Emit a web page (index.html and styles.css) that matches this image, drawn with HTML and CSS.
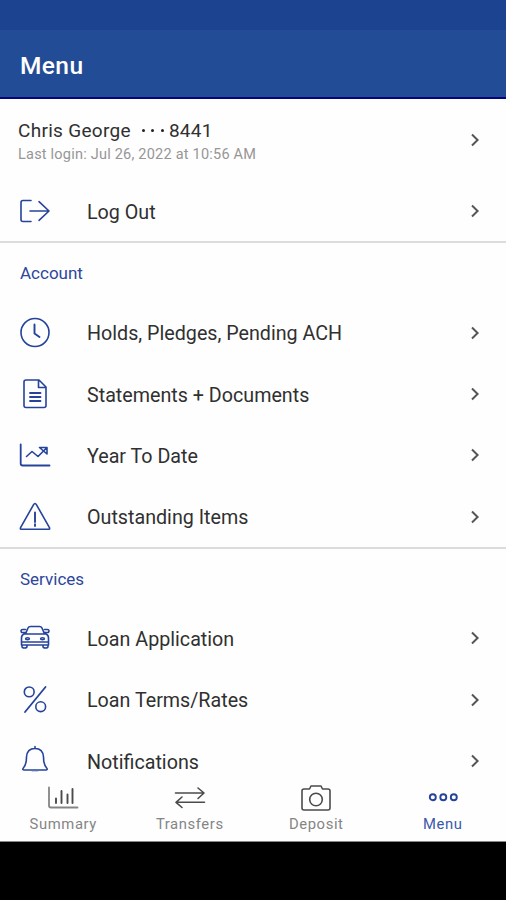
FILE: index.html
```html
<!DOCTYPE html>
<html lang="en">
<head>
<meta charset="utf-8">
<title>Menu</title>
<link rel="stylesheet" href="styles.css">
</head>
<body>
<svg width="0" height="0" class="defs">
  <symbol id="chevron" viewBox="0 0 10 14"><path d="M2 1.500 7.600 7 2 12.500"/></symbol>
</svg>
<div class="screen">
  <div class="status"></div>
  <header class="header"><h1>Menu</h1></header>
  <main class="content">
    <div class="profile">
      <div class="who">
        <div class="name"><span>Chris George</span><i class="dots"><b></b><b></b><b></b></i><span>8441</span></div>
        <div class="login">Last login: Jul 26, 2022 at 10:56 AM</div>
      </div>
      <svg class="chev"><use href="#chevron"/></svg>
    </div>
    <div class="row logout">
      <svg class="icon" viewBox="0 0 32 32"><path d="M12 5.500H4Q2 5.500 2 7.500v17q0 2 2 2h8M11 16h19M20 6.700l10 9.300-10 9.300"/></svg>
      <span class="label">Log Out</span>
      <svg class="chev"><use href="#chevron"/></svg>
    </div>
    <section class="group">
      <h2>Account</h2>
      <div class="row">
        <svg class="icon" viewBox="0 0 32 32"><circle cx="16" cy="15.500" r="14"/><path d="M15.500 7.500v9l5 3.500" stroke-width="1.900"/></svg>
        <span class="label">Holds, Pledges, Pending ACH</span>
        <svg class="chev"><use href="#chevron"/></svg>
      </div>
      <div class="row">
        <svg class="icon" viewBox="0 0 32 32"><path d="M7 2h13l7 7v18.500q0 2-2 2H7q-2 0-2-2V4q0-2 2-2zM19.500 2.500v7H27"/><path d="M11 15h10.500M11 19h10.500M11 23h10.500" stroke-width="1.800"/></svg>
        <span class="label">Statements + Documents</span>
        <svg class="chev"><use href="#chevron"/></svg>
      </div>
      <div class="row">
        <svg class="icon" viewBox="0 0 32 32"><path d="M1.700 5.500v19q0 2 2 2H30.500" stroke-width="1.800"/><path d="M7.500 17.500l5.500-5 6 5 8.500-8.500M20.500 8.500h7.500v6.500z"/></svg>
        <span class="label">Year To Date</span>
        <svg class="chev"><use href="#chevron"/></svg>
      </div>
      <div class="row">
        <svg class="icon" viewBox="0 0 32 32"><path d="M14.600 3.600 1.700 26.300q-1 2 1 2h26.600q2 0 1-2L17.400 3.600q-1.400-2.300-2.800 0z"/><path d="M16 11.500v9.500M16 23.300v1.700" stroke-width="1.900"/></svg>
        <span class="label">Outstanding Items</span>
        <svg class="chev"><use href="#chevron"/></svg>
      </div>
    </section>
    <section class="group">
      <h2>Services</h2>
      <div class="row">
        <svg class="icon" viewBox="0 0 32 32"><path d="M6.500 12 9 6q.7-1.500 2.500-1.500h9Q22.300 4.500 23 6l2.500 6M6.500 10.500H2.500q-1.500-3 1.500-3h2.500M25.500 10.500h4q1.500-3-1.500-3H25.500M5 12h22q2.500 1 2.500 4v7H2.500v-7q0-3 2.500-4zM3 23v1.500q0 1.500 2.500 1.500T8 24.500V23M24 23v1.500q0 1.500 2.500 1.500t2.500-1.500V23M3 20h26"/><ellipse cx="8.500" cy="16.700" rx="1.900" ry="1"/><ellipse cx="23.500" cy="16.700" rx="1.900" ry="1"/></svg>
        <span class="label">Loan Application</span>
        <svg class="chev"><use href="#chevron"/></svg>
      </div>
      <div class="row">
        <svg class="icon" viewBox="0 0 32 32"><circle cx="10.200" cy="7.900" r="4.900"/><circle cx="21.700" cy="22.700" r="4.900"/><path d="M26.500 3 6 28" stroke-width="1.800"/></svg>
        <span class="label">Loan Terms/Rates</span>
        <svg class="chev"><use href="#chevron"/></svg>
      </div>
      <div class="row">
        <svg class="icon" viewBox="0 0 32 32"><path d="M16 1.500v2M16 3.500q-8 0-8.500 8.500Q7.500 20 4 23.500q-.6 1.500 1 1.500h22q1.600 0 1-1.500-3.500-3.500-3.500-11.500Q24 3.500 16 3.500zM13 27.500h6"/></svg>
        <span class="label">Notifications</span>
        <svg class="chev"><use href="#chevron"/></svg>
      </div>
    </section>
  </main>
  <nav class="tabs">
    <div class="tab">
      <svg viewBox="0 0 32 32"><path d="M2 4.500v18q0 2 2 2h26.500" stroke="#858585" stroke-width="1.800"/><path d="M9 15.500V20M14.500 8v12M20.500 11.500V20M25.500 6v14" stroke-width="1.900"/></svg>
      <span>Summary</span>
    </div>
    <div class="tab">
      <svg viewBox="0 0 32 32"><path d="M1.500 10h28M24 5l6 5-6 5.500M30.500 19.300h-28M8 14l-6 5.300L8 24.500" stroke-width="1.600"/></svg>
      <span>Transfers</span>
    </div>
    <div class="tab">
      <svg viewBox="0 0 32 32"><path d="M4 6h5.500l1.500-3h10l1.500 3H28q2 0 2 2v17q0 2-2 2H4q-2 0-2-2V8q0-2 2-2z"/><circle cx="16" cy="16.500" r="6.300"/></svg>
      <span>Deposit</span>
    </div>
    <div class="tab active">
      <svg viewBox="0 0 32 32"><g stroke-width="1.900"><circle cx="5.800" cy="14.200" r="3"/><circle cx="16.300" cy="14.200" r="3"/><circle cx="26.800" cy="14.200" r="3"/></g></svg>
      <span>Menu</span>
    </div>
  </nav>
  <div class="system"></div>
</div>
</body>
</html>
```
FILE: styles.css
```css
* { box-sizing: border-box; }
body { margin: 0; background: #fff; font-family: Roboto, "Liberation Sans", sans-serif; }
.defs { display: none; }
.screen { width: 506px; height: 900px; display: flex; flex-direction: column; overflow: hidden; }
.status { flex: none; height: 30px; background: #1c438f; }
.header { flex: none; height: 69px; padding: 4px 20px 0; display: flex; align-items: center; background: #234c96; border-bottom: 2px solid #04047c; }
h1 { margin: 0; color: #fff; font-size: 24.5px; font-weight: 500; line-height: 30px; letter-spacing: .4px; }
.content { flex: 1; min-height: 0; overflow: hidden; background: #fefefe; }
svg { fill: none; stroke: #25439b; stroke-width: 1.600; stroke-linecap: round; stroke-linejoin: round; flex: none; }
.profile { height: 82px; padding: 0 26px 0 18px; display: flex; align-items: center; justify-content: space-between; }
.who { padding-top: 4px; }
.name { display: flex; align-items: center; font-size: 19px; line-height: 24px; color: #303030; letter-spacing: .3px; }
.dots { display: flex; gap: 6.5px; margin: 0 5px 0 11px; }
.dots b { width: 3px; height: 3px; border-radius: 50%; background: #222; }
.login { font-size: 14.5px; line-height: 23px; color: #969696; letter-spacing: .22px; }
.row { height: 61.4px; padding: 0 26px 0 19px; display: flex; align-items: center; }
.logout { height: 60px; }
.icon { width: 32px; height: 32px; margin-right: 36px; }
.label { flex: 1; padding-top: 3px; font-size: 19.7px; line-height: 20px; color: #303030; }
.chev { width: 10px; height: 14px; stroke: #555; stroke-width: 2; stroke-linecap: butt; stroke-linejoin: miter; }
.group { border-top: 2px solid #dcdcdc; }
h2 { margin: 0; height: 59px; padding-left: 20px; font-size: 17px; font-weight: 400; line-height: 60px; color: #2c479c; letter-spacing: 0; }
.group + .group { margin-top: -1px; }
.tabs { flex: none; height: 70px; padding-top: 11px; display: grid; grid-template-columns: repeat(4, 1fr); background: #fefefe; border-bottom: 1px solid #888; }
.tab { display: flex; flex-direction: column; align-items: center; font-size: 14.8px; line-height: 18px; color: #858585; letter-spacing: .6px; }
.tab svg { width: 32px; height: 32px; stroke: #4b4b4b; }
.tab.active { color: #3b58a8; }
.tab.active svg { stroke: #25439b; }
.system { flex: none; height: 58px; background: #000; }
```
